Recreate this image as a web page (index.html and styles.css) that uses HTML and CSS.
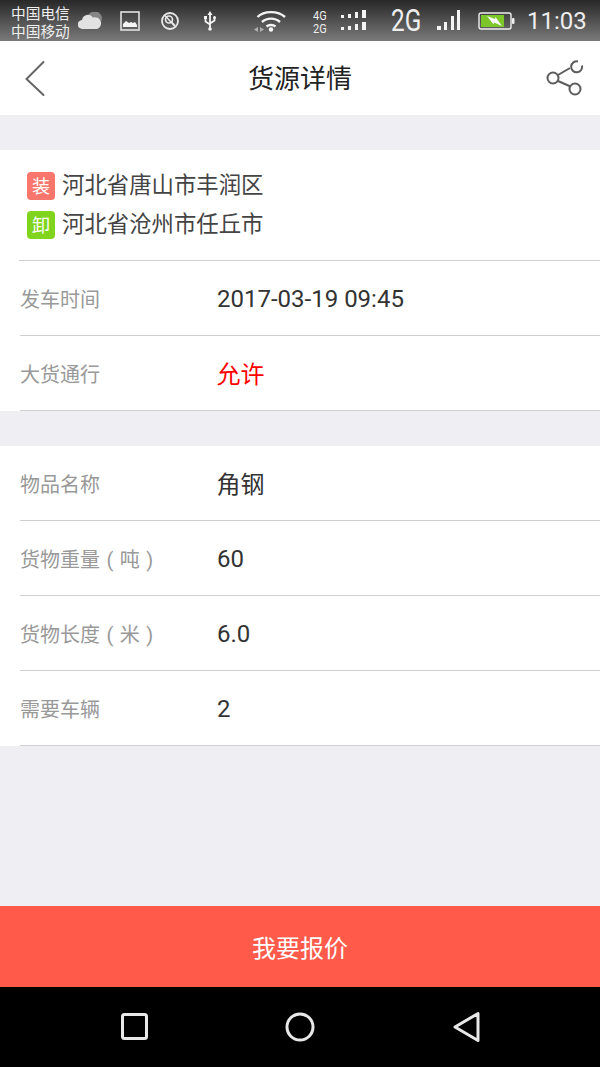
FILE: index.html
```html
<!DOCTYPE html>
<html lang="zh-CN">
  <head>
    <meta charset="UTF-8" />
    <meta name="viewport" content="width=device-width, initial-scale=1.0" />
    <title>货源详情</title>
    <link rel="stylesheet" href="styles.css">
  </head>

  <body>
    <div class="page">
      <!-- system status bar -->
      <div class="status-bar">
        <div class="carrier">中国电信<br>中国移动</div>
        <svg class="icon-cloud" width="24" height="18" viewBox="0 0 24 18">
          <path d="M10 4a6 6 0 0 1 13.500 5l-6-2z" fill="#858585" />
          <path d="M4.500 17a4.500 4.500 0 0 1-.5-9 6 6 0 0 1 11-2.500 6 6 0 0 1 4 11.500z" fill="#e2e2e2" />
        </svg>
        <svg class="icon-image" width="20" height="20" viewBox="0 0 20 20">
          <rect x="1" y="1" width="18" height="18" fill="none" stroke="#e0e0e0" stroke-width="1.6" />
          <path d="M3 16v-3l3-3 3 2 2-1 2 1 2-1 2 3v2z" fill="#f4f4f4" />
        </svg>
        <svg class="icon-nfc" width="18" height="18" viewBox="0 0 18 18" fill="none" stroke="#e8e8e8">
          <circle cx="9" cy="9" r="8" stroke-width="1.8" />
          <circle cx="8" cy="7.500" r="3.500" stroke-width="1.7" />
          <path d="M10.500 10l3.500 3.500M4 3.500l10 11" stroke-width="1.5" />
        </svg>
        <svg class="icon-usb" width="12" height="20" viewBox="0 0 12 20" fill="none" stroke="#f4f4f4" stroke-width="1.8">
          <path d="M6 3v16M1.500 7v3.500L6 13.500M10.500 7v2.500L6 12.500" />
          <path d="M6 0l2.500 4h-5z" fill="#f4f4f4" stroke="none" />
          <circle cx="6" cy="18" r="1.800" fill="#f4f4f4" stroke="none" />
          <rect x="0" y="5" width="3" height="3" fill="#f4f4f4" stroke="none" />
          <circle cx="10.500" cy="6.500" r="1.500" fill="#f4f4f4" stroke="none" />
        </svg>
        <svg class="icon-wifi" width="32" height="22" viewBox="0 0 32 22" fill="none" stroke="#f4f4f4" stroke-width="2.400">
          <path d="M3.500 7C10 .5 24 .5 31 7M8 12c5-4.500 13-4.500 18 0M12.500 16.500c2.500-2 6.500-2 9 0" />
          <circle cx="17" cy="19.500" r="2.200" fill="#f8f8f8" stroke="none" />
          <path d="M0 19.500l4-2.500v5zM6 17l4 2.500-4 2.500z" fill="#b0b0b0" stroke="none" />
        </svg>
        <div class="net-type">4G<br>2G</div>
        <svg class="icon-dots" width="26" height="23" viewBox="0 0 26 23" fill="#f4f4f4">
          <rect x="0" y="5" width="3" height="3" />
          <rect x="7" y="4" width="3" height="4" />
          <rect x="14" y="2" width="3" height="6" />
          <rect x="21" y="0" width="4" height="8" />
          <rect x="0" y="17" width="3" height="3" />
          <rect x="7" y="16" width="3" height="4" />
          <rect x="14" y="14" width="3" height="6" />
          <rect x="21" y="12" width="4" height="8" />
        </svg>
        <div class="net-big"><span>2G</span></div>
        <svg class="icon-bars" width="24" height="21" viewBox="0 0 24 21" fill="#f4f4f4">
          <rect x="0" y="16" width="4" height="4" />
          <rect x="7" y="12" width="3" height="8" />
          <rect x="14" y="6" width="3" height="14" />
          <rect x="20" y="0" width="3" height="20" />
        </svg>
        <svg class="icon-battery" width="37" height="18" viewBox="0 0 37 18">
          <rect x="1" y="1" width="32" height="16" rx="2" fill="none" stroke="#f0f0f0" stroke-width="1.400" />
          <rect x="3" y="3" width="23" height="12" fill="#7cc62a" />
          <rect x="34" y="6" width="2.500" height="6" rx="1" fill="#f0f0f0" />
          <path d="M9 4l8 3 .5-2 6.500 9-8-3.500-.5 2z" fill="#f8f8f8" />
        </svg>
        <div class="clock">11:03</div>
      </div>

      <div class="top-bar">
        <svg class="back-icon" width="24" height="38" viewBox="0 0 24 38" fill="none" stroke="#666" stroke-width="2" stroke-linecap="round">
          <path d="M20.500 3L3.500 20l17 16" />
        </svg>
        <h1>货源详情</h1>
        <svg class="share-icon" width="38" height="40" viewBox="0 0 38 40" fill="none" stroke="#5c5c5c" stroke-width="2">
          <circle cx="7" cy="20" r="5.500" />
          <path d="M32 3.500a5.500 5.500 0 1 0 4 4" />
          <circle cx="29" cy="31" r="5.500" />
          <path d="M12 17L24 10M12 23l12.500 5.500" />
        </svg>
      </div>

      <div class="content">
        <div class="section">
          <div class="route">
            <div class="route-line">
              <span class="tag tag-load">装</span>
              <span class="place">河北省唐山市丰润区</span>
            </div>
            <div class="route-line">
              <span class="tag tag-unload">卸</span>
              <span class="place">河北省沧州市任丘市</span>
            </div>
          </div>
          <div class="row">
            <div class="label">发车时间</div>
            <div class="value">2017-03-19 09:45</div>
          </div>
          <div class="row">
            <div class="label">大货通行</div>
            <div class="value value-cjk value-red">允许</div>
          </div>
        </div>

        <div class="section">
          <div class="row">
            <div class="label">物品名称</div>
            <div class="value value-cjk">角钢</div>
          </div>
          <div class="row">
            <div class="label">货物重量 ( 吨 )</div>
            <div class="value">60</div>
          </div>
          <div class="row">
            <div class="label">货物长度 ( 米 )</div>
            <div class="value">6.0</div>
          </div>
          <div class="row">
            <div class="label">需要车辆</div>
            <div class="value">2</div>
          </div>
        </div>
      </div>

      <button class="quote-btn">我要报价</button>

      <!-- android nav keys -->
      <div class="nav-bar">
        <svg width="40" height="40" viewBox="0 0 40 40" fill="none" stroke="#e8e8e8" stroke-width="3">
          <rect x="8.500" y="7.500" width="24" height="24" rx="2" />
        </svg>
        <svg width="40" height="40" viewBox="0 0 40 40" fill="none" stroke="#e8e8e8" stroke-width="3">
          <circle cx="20" cy="20" r="13" />
        </svg>
        <svg width="40" height="40" viewBox="0 0 40 40" fill="none" stroke="#e8e8e8" stroke-width="3" stroke-linejoin="round">
          <path d="M9 20L32 6.500v27z" />
        </svg>
      </div>
    </div>
  </body>
</html>
```

FILE: styles.css
```css
/* Basic reset */
* {
  margin: 0;
  padding: 0;
  box-sizing: border-box;
}

body {
  font-family: Roboto, "Noto Sans CJK SC", sans-serif;
  background-color: #eeeef3;
}

.page {
  display: flex;
  flex-direction: column;
  height: 1067px;
  overflow: hidden;
}

/* status bar */
.status-bar {
  display: flex;
  align-items: center;
  flex: 0 0 41px;
  padding-left: 11px;
  color: #eee;
  background: linear-gradient(#272727, #7a7a7a);
}

.carrier {
  width: 59px;
  font-size: 14.7px;
  line-height: 18px;
  white-space: nowrap;
  margin-top: 5px;
}

.icon-cloud {
  margin-left: 8px;
}

.icon-image {
  margin-left: 18px;
}

.icon-nfc {
  margin-left: 21px;
}

.icon-usb {
  margin-left: 25px;
}

.icon-wifi {
  margin-left: 38px;
}

.net-type {
  width: 14px;
  margin-left: 27px;
  font-size: 12.5px;
  line-height: 13px;
  white-space: nowrap;
  transform: scaleX(0.88);
  transform-origin: left;
  margin-top: 3px;
}

.icon-dots {
  margin-left: 14px;
  margin-top: 1px;
}

.net-big {
  width: 30px;
  margin-left: 24px;
  font-size: 32px;
  line-height: 41px;
  white-space: nowrap;
}

.net-big span {
  display: inline-block;
  transform: scaleX(0.76);
  transform-origin: left;
}

.icon-bars {
  margin-left: 16px;
}

.icon-battery {
  margin-left: 17px;
}

.clock {
  margin-left: 12px;
  font-size: 24px;
}

/* header */
.top-bar {
  display: flex;
  align-items: center;
  flex: 0 0 74px;
  padding: 0 16px 0 23px;
  background-color: #fff;
}

.top-bar h1 {
  font-size: 26px;
  font-weight: 400;
  color: #222;
  margin-bottom: 4px;
}

.back-icon {
  margin-right: 201px;
}

.share-icon {
  margin-left: auto;
}

/* detail sections */
.content {
  flex: 1;
  padding-top: 35px;
}

.section {
  background-color: #fff;
  margin-bottom: 35px;
}

.route {
  display: flex;
  flex-direction: column;
  gap: 11px;
  height: 111px;
  padding: 22px 0 0 27px;
  border-bottom: 1px solid #cfcfd3;
  border-image: linear-gradient(to right, #fff 20px, #cfcfd3 20px) 1;
}

.route-line {
  display: flex;
  align-items: center;
  gap: 7px;
  height: 28px;
  font-size: 22.4px;
  color: #444;
}

.place {
  margin-bottom: 6px;
}

.tag {
  display: flex;
  align-items: center;
  justify-content: center;
  width: 28px;
  height: 28px;
  padding-bottom: 3px;
  border-radius: 4px;
  font-size: 18px;
  color: #fff;
}

.tag-load {
  background-color: #f8766c;
}

.tag-unload {
  background-color: #80d41e;
}

.row {
  display: flex;
  align-items: center;
  height: 75px;
  margin-left: 20px;
  border-bottom: 1px solid #cfcfd3;
}

.label {
  width: 197px;
  font-size: 20px;
  word-spacing: 1.5px;
  color: #999;
  white-space: nowrap;
}

.value {
  font-size: 24px;
  color: #333;
  padding-top: 2px;
}

.value-cjk {
  margin-left: -0.5px;
  padding-top: 0;
  padding-bottom: 2px;
}

.value-red {
  color: #f00;
}

/* bottom */
.quote-btn {
  flex: 0 0 81px;
  border: none;
  font-family: inherit;
  font-size: 24px;
  color: #fff;
  background-color: #ff5a4a;
}

.nav-bar {
  display: flex;
  align-items: center;
  justify-content: space-between;
  flex: 0 0 80px;
  padding: 0 114px;
  background-color: #000;
}
```
